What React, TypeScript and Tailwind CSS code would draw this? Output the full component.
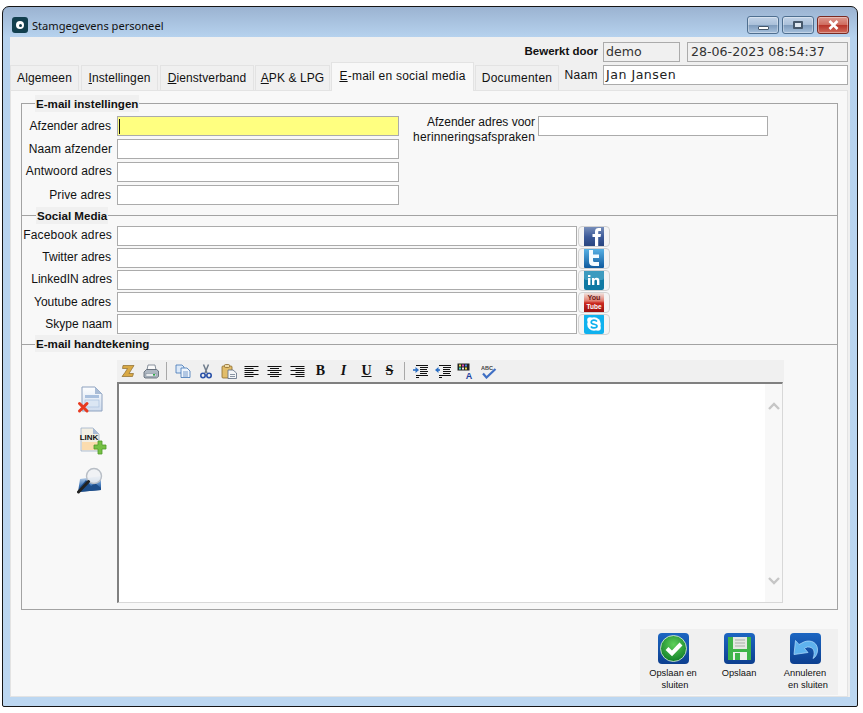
import { ReactNode } from "react";

const Field = ({ className = "", children }: { className?: string; children?: ReactNode }) => (
  <div className={`h-[20px] shrink-0 border border-[#ababab] flex items-center ${className}`}>{children}</div>
);

const FormRow = ({ label, width, labelClass = "", children }: { label: string; width: string; labelClass?: string; children?: ReactNode }) => (
  <div className="flex items-center h-[20px]">
    <span className={`w-[90px] shrink-0 flex justify-end text-[12px] leading-[14px] whitespace-nowrap text-[#111] ${labelClass}`}>{label}</span>
    <Field className={`ml-[5px] bg-white ${width}`} />
    {children}
  </div>
);

const Legend = ({ className = "ml-[14px]", children }: { className?: string; children: ReactNode }) => (
  <div className={`-mt-[9px] w-fit h-[17px] px-[1px] bg-[#f0f0f0] text-[11.6px] leading-[17px] font-bold text-[#111] ${className}`}>{children}</div>
);

const Tab = ({ width, className = "tracking-[0.1px]", children }: { width: string; className?: string; children: ReactNode }) => (
  <div className={`h-[26px] -mb-px ${width} mr-[2px] shrink-0 flex items-center justify-center bg-[#f0f0f0] border border-[#e3e3e3] text-[12px] text-[#111] ${className}`}>
    <span>{children}</span>
  </div>
);

const WinButton = ({ className, children }: { className: string; children: ReactNode }) => (
  <div className={`w-[32px] h-[18px] rounded-[3px] border flex items-center justify-center shadow-[inset_0_0_0_1px_rgba(255,255,255,0.35)] ${className}`}>
    {children}
  </div>
);

const FacebookIcon = () => (
  <svg width="20" height="20" viewBox="0 0 20 20">
    <defs>
      <linearGradient id="fb" x1="0" y1="0" x2="0" y2="1">
        <stop offset="0" stopColor="#7d93bd" />
        <stop offset="0.55" stopColor="#3b5998" />
        <stop offset="1" stopColor="#29457f" />
      </linearGradient>
    </defs>
    <rect width="20" height="20" fill="url(#fb)" />
    <path d="M11 20V11H8.5V8H11V5.5C11 3 12.5 2 14.5 2H17V5H15.2C14.4 5 14.2 5.4 14.2 6V8H17L16.5 11H14.2V20Z" fill="#fff" />
  </svg>
);

const TwitterIcon = () => (
  <svg width="20" height="20" viewBox="0 0 20 20">
    <defs>
      <linearGradient id="tw" x1="0" y1="0" x2="0" y2="1">
        <stop offset="0" stopColor="#5bb5e8" />
        <stop offset="1" stopColor="#0f5a9e" />
      </linearGradient>
    </defs>
    <rect width="20" height="20" rx="1" fill="url(#tw)" />
    <path d="M5 2H9V6.5H15V10H9V12.5C9 13.8 9.8 14 11 14H15V18H10C6.5 18 5 16.5 5 13.5Z" fill="#f4fbff" />
  </svg>
);

const LinkedInIcon = () => (
  <svg width="20" height="20" viewBox="0 0 20 20">
    <rect width="20" height="20" rx="2" fill="#0f79a3" />
    <rect width="20" height="10" rx="2" fill="#3d9bbf" />
    <rect x="4" y="8" width="2.4" height="7" fill="#fff" />
    <rect x="4" y="5" width="2.4" height="2" fill="#fff" />
    <path d="M8 8H10.2V9C10.8 8.2 11.6 7.8 12.6 7.8C14.6 7.8 15.4 9 15.4 11V15H13V11.4C13 10.4 12.7 9.8 11.8 9.8C10.9 9.8 10.4 10.4 10.4 11.4V15H8Z" fill="#fff" />
  </svg>
);

const YoutubeIcon = () => (
  <svg width="20" height="20" viewBox="0 0 20 20">
    <defs>
      <linearGradient id="yt" x1="0" y1="0" x2="0" y2="1">
        <stop offset="0" stopColor="#f2f0ec" />
        <stop offset="0.45" stopColor="#e07a6c" />
        <stop offset="0.55" stopColor="#cc2a20" />
        <stop offset="1" stopColor="#98100e" />
      </linearGradient>
    </defs>
    <rect width="20" height="20" fill="url(#yt)" />
    <text x="10" y="8" textAnchor="middle" fontSize="8" fontWeight="700" fontFamily="Liberation Sans, sans-serif" fill="#6e2018" textLength="13" lengthAdjust="spacingAndGlyphs">You</text>
    <text x="10" y="16.5" textAnchor="middle" fontSize="8" fontWeight="700" fontFamily="Liberation Sans, sans-serif" fill="#fff" textLength="15" lengthAdjust="spacingAndGlyphs">Tube</text>
  </svg>
);

const SkypeIcon = () => (
  <svg width="20" height="20" viewBox="0 0 20 20">
    <rect width="20" height="20" rx="2" fill="#0fb1ee" />
    <circle cx="10" cy="10" r="6.8" fill="#fff" />
    <circle cx="6" cy="6" r="2.8" fill="#fff" />
    <circle cx="14" cy="14" r="2.8" fill="#fff" />
    <path d="M13 7.5C12.2 6.6 11.2 6.2 10 6.2C8.4 6.2 7.2 7 7.2 8.2C7.2 11 13 9.6 13 12C13 13.2 11.7 13.9 10 13.9C8.6 13.9 7.6 13.4 6.9 12.4" fill="none" stroke="#0fb1ee" strokeWidth="1.7" />
  </svg>
);

const SocialButton = ({ children }: { children: ReactNode }) => (
  <div className="ml-[1px] w-[32px] h-[21px] shrink-0 rounded-[4px] border border-[#d2d2d2] bg-[#f4f4f4] flex items-center justify-center overflow-hidden">
    {children}
  </div>
);

const Lines = ({ align }: { align: "left" | "center" | "right" }) => {
  const rows = [14, 9, 14, 9, 14, 9];
  return (
    <svg width="15" height="13" viewBox="0 0 15 13">
      {rows.map((w, i) => {
        const x = align === "left" ? 0.5 : align === "right" ? 14.5 - w : (15 - w) / 2;
        return <rect key={i} x={x} y={i * 2 + 1} width={w} height="1" fill="#111" />;
      })}
    </svg>
  );
};

const ScrollIcon = () => (
  <svg width="14" height="14" viewBox="0 0 14 14">
    <path d="M2 1.5H13L10.5 5.5L8 9.5H12.5L11.5 12.5H1L4 8.5L6.5 4.5H1.5Z" fill="#d9a945" stroke="#8b6a2c" strokeWidth="0.7" />
  </svg>
);

const PrintIcon = () => (
  <svg width="16" height="15" viewBox="0 0 16 15">
    <path d="M5 1H12L13 6H4Z" fill="#fafafa" stroke="#6f7a88" strokeWidth="0.8" />
    <path d="M1 8L3.5 5.5H13.5L15.5 7V12.5L13.5 14H2L1 13Z" fill="#aeb7c2" stroke="#56606c" strokeWidth="0.8" />
    <rect x="3" y="9.5" width="10" height="3" fill="#e8ebee" stroke="#7b8794" strokeWidth="0.5" />
    <rect x="10" y="10" width="2" height="1.6" fill="#27a844" />
  </svg>
);

const CopyIcon = () => (
  <svg width="16" height="14" viewBox="0 0 16 14">
    <path d="M1 1H7L9 3V9H1Z" fill="#dce9f8" stroke="#3f74b5" strokeWidth="0.8" />
    <path d="M6 4H12L15 7V13.5H6Z" fill="#eef5fc" stroke="#3f74b5" strokeWidth="0.8" />
    <path d="M8 8H13M8 10H13M8 12H13" stroke="#3f74b5" strokeWidth="0.7" />
  </svg>
);

const CutIcon = () => (
  <svg width="12" height="15" viewBox="0 0 12 15">
    <path d="M3.5 0.5L7 9M8.5 0.5L5 9" stroke="#6f7c8c" strokeWidth="1.5" />
    <circle cx="3" cy="11.5" r="2.2" fill="none" stroke="#2b52a8" strokeWidth="1.6" />
    <circle cx="9" cy="11.5" r="2.2" fill="none" stroke="#2b52a8" strokeWidth="1.6" />
  </svg>
);

const PasteIcon = () => (
  <svg width="16" height="15" viewBox="0 0 16 15">
    <rect x="1" y="2" width="10" height="12" rx="1" fill="#e2bd6a" stroke="#8b6a2c" strokeWidth="0.8" />
    <rect x="3.5" y="0.5" width="5" height="3" rx="1" fill="#f0dca8" stroke="#8b6a2c" strokeWidth="0.8" />
    <path d="M7 6H12L15.5 9V14.5H7Z" fill="#f4f6f8" stroke="#5b6b80" strokeWidth="0.8" />
    <path d="M9 10.5H14M9 12.5H14" stroke="#5b6b80" strokeWidth="0.7" />
  </svg>
);

const IndentIcon = ({ out }: { out?: boolean }) => (
  <svg width="16" height="14" viewBox="0 0 16 14">
    <path d="M4 1.5H16M8 3.5H16M8 5.5H15M8 7.5H16M8 9.5H15M4 11.5H16M4 13.5H7" stroke="#111" strokeWidth="1" />
    <path d="M1 6H5" stroke="#2b6fc4" strokeWidth="1.6" />
    {out ? <path d="M0 6L3.5 3V9Z" fill="#2b6fc4" /> : <path d="M7 6L3.5 3V9Z" fill="#2b6fc4" />}
  </svg>
);

const ColorIcon = () => (
  <svg width="17" height="16" viewBox="0 0 17 16">
    <rect x="0.5" y="0.5" width="12" height="7" fill="#222" />
    <rect x="2" y="1.5" width="2" height="2" fill="#e8d94a" />
    <rect x="5" y="1.5" width="2" height="2" fill="#d94ab0" />
    <rect x="8" y="1.5" width="2" height="2" fill="#4a7ad9" />
    <rect x="2" y="4.5" width="2" height="2" fill="#4ad9c8" />
    <rect x="5" y="4.5" width="2" height="2" fill="#e8e8e8" />
    <rect x="8" y="4.5" width="2" height="2" fill="#e8d94a" />
    <text x="12" y="15.5" textAnchor="middle" fontSize="9" fontWeight="700" fontFamily="Liberation Sans, sans-serif" fill="#1c3f9e">A</text>
  </svg>
);

const SpellIcon = () => (
  <svg width="16" height="15" viewBox="0 0 16 15">
    <text x="0" y="5.5" fontSize="5.5" fontWeight="700" fontFamily="Liberation Sans, sans-serif" fill="#444">ABC</text>
    <path d="M2 9.5L5.5 13.5L14.5 5" fill="none" stroke="#3f6fc4" strokeWidth="2.2" />
  </svg>
);

const DeleteDocIcon = () => (
  <svg width="28" height="28" viewBox="0 0 28 28">
    <defs>
      <linearGradient id="doc" x1="0" y1="0" x2="0" y2="1">
        <stop offset="0" stopColor="#fdfeff" />
        <stop offset="1" stopColor="#cfdcee" />
      </linearGradient>
    </defs>
    <path d="M5 1H18L25 8V25H5Z" fill="url(#doc)" stroke="#8ea2bf" strokeWidth="1" />
    <path d="M18 1V8H25Z" fill="#a9bcd6" />
    <rect x="8" y="9" width="14" height="3" fill="#a9c0de" />
    <rect x="8" y="14" width="14" height="7" fill="#dbe6f3" stroke="#a9c0de" strokeWidth="0.7" />
    <path d="M2.5 17.5L10 25M10 17.5L2.5 25" stroke="#e8391f" strokeWidth="3" strokeLinecap="round" />
  </svg>
);

const LinkDocIcon = () => (
  <svg width="30" height="30" viewBox="0 0 30 30">
    <path d="M3 1H15L21 7V24H3Z" fill="#f3efe4" stroke="#9fb1c9" strokeWidth="0.8" />
    <path d="M15 1V7H21Z" fill="#a9bcd6" />
    <rect x="4" y="15" width="16" height="8" fill="#fbdcae" />
    <text x="11" y="13" textAnchor="middle" fontSize="8" fontWeight="700" fontFamily="Liberation Sans, sans-serif" fill="#111">LINK</text>
    <path d="M20 14H24V18H28V22H24V27H20V22H16V18H20Z" fill="#76c044" stroke="#4f9a2a" strokeWidth="0.8" />
  </svg>
);

const PreviewIcon = () => (
  <svg width="28" height="28" viewBox="0 0 28 28">
    <defs>
      <linearGradient id="pic" x1="0" y1="0" x2="0" y2="1">
        <stop offset="0" stopColor="#cfe0f3" />
        <stop offset="0.6" stopColor="#3f76b8" />
        <stop offset="1" stopColor="#123a70" />
      </linearGradient>
    </defs>
    <path d="M3 12L24 9V23L1 25Z" fill="url(#pic)" />
    <path d="M3 20L9 13L14 19L18 16L24 21V23L1 25Z" fill="#1e4f8c" />
    <circle cx="17" cy="9" r="7.5" fill="#eef1f5" fillOpacity="0.85" stroke="#b8bec6" strokeWidth="1.4" />
    <path d="M11.5 14.5L1.5 25" stroke="#222" strokeWidth="3" strokeLinecap="round" />
  </svg>
);

const CheckIcon = () => (
  <svg width="31" height="31" viewBox="0 0 31 31">
    <defs>
      <radialGradient id="grn" cx="0.5" cy="0.35" r="0.7">
        <stop offset="0" stopColor="#5fd05a" />
        <stop offset="1" stopColor="#0c7a25" />
      </radialGradient>
    </defs>
    <circle cx="15.5" cy="15.5" r="13" fill="url(#grn)" stroke="#e6f2e6" strokeWidth="0.8" />
    <path d="M9 15.5L14 20.5L23 11" fill="none" stroke="#fff" strokeWidth="4" />
  </svg>
);

const SaveIcon = () => (
  <svg width="31" height="31" viewBox="0 0 31 31">
    <path d="M4 4H27V27H4Z" fill="#3fb54a" />
    <rect x="9" y="4" width="14" height="12" fill="#e4e8e4" />
    <path d="M11 7H21M11 10H21M11 13H21" stroke="#a9b0a9" strokeWidth="1" />
    <rect x="9" y="19" width="14" height="8" fill="#eef0ee" />
    <rect x="11" y="20" width="5" height="7" fill="#3fb54a" />
  </svg>
);

const UndoIcon = () => (
  <svg width="31" height="31" viewBox="0 0 31 31">
    <path d="M12 10C18 6 27 8 27.5 16C27.8 20 26 24 23 25.5C25 21 24.5 16 21 14.5C18.5 13.4 16 14 14.5 15.5L18 19.5L4 21.5L5.5 7.5L9 11.5Z" fill="#5fb2ee" stroke="#a8d6f7" strokeWidth="0.8" />
  </svg>
);

const ActionTile = ({ children }: { children: ReactNode }) => (
  <div className="w-[31px] h-[31px] rounded-[4px] bg-[linear-gradient(to_bottom,#1c66c2,#0d3f8f)] overflow-hidden">{children}</div>
);

const ActionButton = ({ icon, children }: { icon: ReactNode; children: ReactNode }) => (
  <div className="w-[66px] pt-[4px] flex flex-col items-center">
    <ActionTile>{icon}</ActionTile>
    <div className="mt-[3px] text-[9.3px] leading-[12px] text-center text-[#111] whitespace-nowrap">{children}</div>
  </div>
);

const ToolCell = ({ children, width = "w-[23px]" }: { children: ReactNode; width?: string }) => (
  <div className={`${width} h-full shrink-0 flex items-center justify-center`}>{children}</div>
);

const Sep = ({ width }: { width: string }) => (
  <div className={`${width} h-full shrink-0 flex items-center justify-center`}>
    <div className="w-px h-[18px] bg-[#a8a8a8]" />
  </div>
);

const Glyph = ({ className = "", children }: { className?: string; children: ReactNode }) => (
  <span className={`text-[14px] leading-none text-[#111] font-['Liberation_Serif',serif] font-bold ${className}`}>{children}</span>
);

export default function App() {
  return (
    <div className="w-[863px] h-[713px] bg-white pt-[6px] pl-[2px] overflow-hidden font-['Liberation_Sans',Arial,sans-serif]">
      <div className="w-[856px] h-[701px] border border-[#151515] rounded-t-[7px] rounded-b-[2px] flex flex-col bg-[linear-gradient(to_bottom,#9bb3d1_0px,#b6d2ee_30px,#bcd7f1_100%)]">
        {/* title bar */}
        <div className="h-[30px] shrink-0 flex items-start pl-[9px] pr-[8px]">
          <div className="mt-[10px] w-[16px] h-[16px] rounded-[3px] bg-[#123f4e] flex items-center justify-center">
            <div className="w-[8px] h-[8px] rounded-full bg-white flex items-center justify-center">
              <div className="w-[3px] h-[3px] rounded-full bg-[#123f4e]" />
            </div>
          </div>
          <span className="ml-[4px] mt-[11px] text-[11.1px] leading-[16px] text-[#111] font-['Noto_Sans',sans-serif]">Stamgegevens personeel</span>
          <div className="ml-auto mt-[9px] flex gap-[3px]">
            <WinButton className="border-[#4f6f90] bg-[linear-gradient(to_bottom,#c3d4e8_0%,#a9bfd9_50%,#7f9cbd_52%,#a6c0dc_100%)]">
              <div className="mt-[5px] w-[11px] h-[4px] bg-white border border-[#46586c] rounded-[1px]" />
            </WinButton>
            <WinButton className="border-[#4f6f90] bg-[linear-gradient(to_bottom,#c3d4e8_0%,#a9bfd9_50%,#7f9cbd_52%,#a6c0dc_100%)]">
              <div className="w-[10px] h-[8px] bg-[#dfe8f2] border-2 border-[#46586c] rounded-[1px]" />
            </WinButton>
            <WinButton className="border-[#7a2a22] bg-[linear-gradient(to_bottom,#dc9a90_0%,#cf6a5c_50%,#b8352a_52%,#cf6a5a_100%)]">
              <svg width="13" height="10" viewBox="0 0 13 10">
                <path d="M2.5 1L10.5 9M10.5 1L2.5 9" stroke="#fff" strokeWidth="2.6" />
              </svg>
            </WinButton>
          </div>
        </div>

        {/* client area */}
        <div className="mx-[7px] w-[840px] h-[660px] bg-[#f0f0f0] flex flex-col">
          <div className="h-[53px] shrink-0 flex pr-[2px]">
            <div className="flex items-end relative z-10 shrink-0">
              <Tab width="w-[69px]">Al<u>g</u>emeen</Tab>
              <Tab width="w-[77px]"><u>I</u>nstellingen</Tab>
              <Tab width="w-[94px]"><u>D</u>ienstverband</Tab>
              <div className="-ml-px">
                <Tab width="w-[75px]"><u>A</u>PK &amp; LPG</Tab>
              </div>
              <div className="-ml-px mr-px w-[143px] h-[29px] -mb-px pb-[2px] shrink-0 flex items-center justify-center bg-[#f8f8f8] border border-b-0 border-[#e3e3e3] text-[12px] text-[#111] tracking-[0.25px]">
                <span><u>E</u>-mail en social media</span>
              </div>
              <Tab width="w-[84px]" className="tracking-[0.25px]">Documenten</Tab>
            </div>
            <div className="ml-auto w-[285px] shrink-0 pt-[5px] flex flex-col items-end gap-[3px] relative z-20">
              <div className="flex items-center whitespace-nowrap">
                <span className="text-[11.5px] font-bold text-[#111]">Bewerkt door</span>
                <Field className="ml-[5px] w-[77px] pl-[2px] bg-[#f0f0f0] text-[12.6px] font-['DejaVu_Sans',sans-serif] text-[#333]">demo</Field>
                <Field className="ml-[7px] w-[161px] pl-[3px] bg-[#f0f0f0] text-[12.6px] font-['DejaVu_Sans',sans-serif] text-[#333]">28-06-2023 08:54:37</Field>
              </div>
              <div className="flex items-center whitespace-nowrap">
                <span className="text-[12px] text-[#111] -mt-[1px] tracking-[0.4px]">Naam</span>
                <Field className="ml-[5px] w-[245px] pl-[2px] bg-white text-[12.6px] tracking-[0.5px] font-['DejaVu_Sans',sans-serif] text-[#222]">Jan Jansen</Field>
              </div>
            </div>
          </div>

          <div className="flex-1 w-[838px] bg-[#f8f8f8] border border-[#e3e3e3] pl-[10px] pt-[12px] flex flex-col">
            <div className="w-[817px] h-[507px] shrink-0 border border-[#a3a3a3] flex flex-col">
              {/* e-mail instellingen */}
              <div className="h-[111px] shrink-0">
                <Legend className="ml-[13px]">E-mail instellingen</Legend>
                <div className="mt-[4px] flex">
                  <div className="w-[377px] shrink-0 flex flex-col gap-[3px]">
                    <div className="flex items-center">
                      <span className="w-[89px] mr-px shrink-0 text-right text-[12px] leading-[14px] whitespace-nowrap text-[#111]">Afzender adres</span>
                      <Field className="ml-[5px] w-[282px] bg-[#ffff80]">
                        <div className="ml-[1px] w-[1px] h-[15px] bg-[#111]" />
                      </Field>
                    </div>
                    <FormRow label="Naam afzender" width="w-[282px]" labelClass="tracking-[0.1px]" />
                    <FormRow label="Antwoord adres" width="w-[282px]" labelClass="tracking-[0.15px] -mt-[2px]" />
                    <FormRow label="Prive adres" width="w-[282px]" labelClass="tracking-[0.1px] pr-px" />
                  </div>
                  <div className="flex items-start">
                    <span className="w-[136px] -mt-[1px] text-right text-[12px] leading-[15px] whitespace-nowrap text-[#111]">
                      Afzender adres voor
                      <br />
                      <span className="tracking-[0.15px]">herinneringsafspraken</span>
                    </span>
                    <Field className="ml-[3px] w-[230px] bg-white" />
                  </div>
                </div>
              </div>

              {/* social media */}
              <div className="h-[129px] shrink-0 border-t border-[#a3a3a3]">
                <Legend>Social Media</Legend>
                <div className="mt-[2px] flex flex-col gap-[2px]">
                  <FormRow label="Facebook adres" width="w-[460px]" labelClass="tracking-[0.2px] -mt-[2px]">
                    <SocialButton><FacebookIcon /></SocialButton>
                  </FormRow>
                  <FormRow label="Twitter adres" width="w-[460px]" labelClass="pr-px -mt-[2px]">
                    <SocialButton><TwitterIcon /></SocialButton>
                  </FormRow>
                  <FormRow label="LinkedIN adres" width="w-[460px]" labelClass="-mt-[2px]">
                    <SocialButton><LinkedInIcon /></SocialButton>
                  </FormRow>
                  <FormRow label="Youtube adres" width="w-[460px]" labelClass="pr-px">
                    <SocialButton><YoutubeIcon /></SocialButton>
                  </FormRow>
                  <FormRow label="Skype naam" width="w-[460px]">
                    <SocialButton><SkypeIcon /></SocialButton>
                  </FormRow>
                </div>
              </div>

              {/* handtekening */}
              <div className="flex-1 border-t border-[#a3a3a3]">
                <Legend className="ml-[13px] relative -top-px">E-mail handtekening</Legend>
                <div className="mt-[7px] flex">
                  <div className="w-[95px] shrink-0 pl-[55px] pt-[26px] flex flex-col">
                    <DeleteDocIcon />
                    <div className="mt-[13px] ml-[1px]"><LinkDocIcon /></div>
                    <div className="mt-[10px]"><PreviewIcon /></div>
                  </div>
                  <div className="w-[667px] shrink-0">
                    <div className="h-[22px] bg-[#f0f0f0] flex items-center">
                      <ToolCell width="w-[22px]"><ScrollIcon /></ToolCell>
                      <ToolCell><PrintIcon /></ToolCell>
                      <Sep width="w-[9px]" />
                      <ToolCell><CopyIcon /></ToolCell>
                      <ToolCell><CutIcon /></ToolCell>
                      <ToolCell><PasteIcon /></ToolCell>
                      <ToolCell><Lines align="left" /></ToolCell>
                      <ToolCell><Lines align="center" /></ToolCell>
                      <ToolCell><Lines align="right" /></ToolCell>
                      <ToolCell><Glyph>B</Glyph></ToolCell>
                      <ToolCell><Glyph className="italic">I</Glyph></ToolCell>
                      <ToolCell><Glyph className="underline">U</Glyph></ToolCell>
                      <ToolCell><Glyph className="line-through">S</Glyph></ToolCell>
                      <Sep width="w-[7px]" />
                      <ToolCell><IndentIcon /></ToolCell>
                      <ToolCell><IndentIcon out /></ToolCell>
                      <ToolCell><ColorIcon /></ToolCell>
                      <ToolCell><SpellIcon /></ToolCell>
                    </div>
                    <div className="w-[666px] h-[221px] border-t-2 border-l-2 border-t-[#808080] border-l-[#808080] border-r border-b border-r-[#d8d8d8] border-b-[#d8d8d8] bg-white flex justify-end">
                      <div className="w-[17px] h-full bg-[#f8f8f8] pt-[18px] pb-[17px] flex flex-col items-center justify-between">
                        <svg width="12" height="8" viewBox="0 0 12 8">
                          <path d="M1 7L6 2L11 7" fill="none" stroke="#c6c6c6" strokeWidth="2.4" />
                        </svg>
                        <svg width="12" height="8" viewBox="0 0 12 8">
                          <path d="M1 1L6 6L11 1" fill="none" stroke="#c6c6c6" strokeWidth="2.4" />
                        </svg>
                      </div>
                    </div>
                  </div>
                </div>
              </div>
            </div>

            {/* bottom buttons */}
            <div className="mt-[19px] mr-[9px] self-end w-[198px] h-[66px] bg-[#f0f0f0] flex">
              <ActionButton icon={<CheckIcon />}>
                Opslaan en
                <br />
                <span className="ml-[4px]">sluiten</span>
              </ActionButton>
              <ActionButton icon={<SaveIcon />}>Opslaan</ActionButton>
              <ActionButton icon={<UndoIcon />}>
                Annuleren
                <br />
                <span className="ml-[6px]">en sluiten</span>
              </ActionButton>
            </div>
          </div>
        </div>
      </div>
    </div>
  );
}
